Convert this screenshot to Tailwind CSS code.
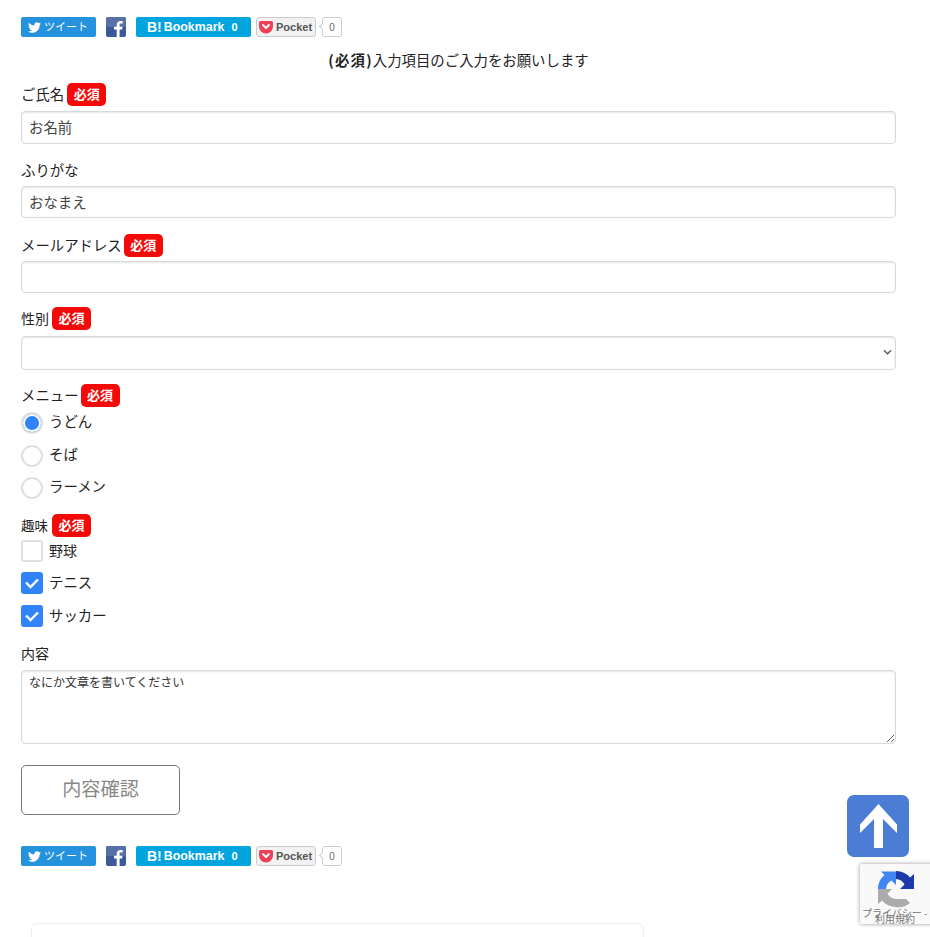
<!DOCTYPE html>
<html lang="ja">
<head>
  <meta charset="UTF-8">
  <title>お問い合わせ</title>
  <meta name="viewport" content="width=device-width, initial-scale=1.0">
  <script src="https://cdn.jsdelivr.net/npm/@tailwindcss/browser@4"></script>
</head>
<body class="bg-white">
  <div class="relative h-[937px] overflow-hidden font-['Noto_Sans_CJK_JP','Liberation_Sans',sans-serif] text-[14.4px] text-[#222]">
    <div class="w-[875px] ml-[21px] pt-[17px]">

      <!-- share buttons -->
      <div class="flex h-[20px] items-center font-['Liberation_Sans','Noto_Sans_CJK_JP',sans-serif]">
        <div class="flex h-[20px] w-[75px] items-center justify-center gap-[3px] rounded-[2px] bg-[#2492dc] pr-[1px] text-[11px] text-white">
          <svg class="w-[13px] h-[13px]" viewBox="0 0 24 24" fill="white"><path d="M23.953 4.57a10 10 0 01-2.825.775 4.958 4.958 0 002.163-2.723c-.951.555-2.005.959-3.127 1.184a4.92 4.92 0 00-8.384 4.482C7.69 8.095 4.067 6.13 1.64 3.162a4.822 4.822 0 00-.666 2.475c0 1.71.87 3.213 2.188 4.096a4.904 4.904 0 01-2.228-.616v.06a4.923 4.923 0 003.946 4.827 4.996 4.996 0 01-2.212.085 4.936 4.936 0 004.604 3.417 9.867 9.867 0 01-6.102 2.105c-.39 0-.779-.023-1.17-.067a13.995 13.995 0 007.557 2.209c9.053 0 13.998-7.496 13.998-13.985 0-.21 0-.42-.015-.63A9.935 9.935 0 0024 4.59z"/></svg>
          <span>ツイート</span>
        </div>
        <svg class="ml-[10px] w-[20px] h-[20px]" viewBox="0 0 20 20"><rect width="20" height="20" rx="2" fill="#3b5998"/><rect width="20" height="10" rx="2" fill="#5671a8"/><path d="M13.6 20v-7.4h2.5l.4-2.9h-2.9V8c0-.8.3-1.4 1.5-1.4h1.5V4c-.3 0-1.2-.1-2.2-.1-2.200 0-3.700 1.300-3.700 3.800v2H8v2.900h2.700V20z" fill="white"/></svg>
        <div class="ml-[10px] flex h-[20px] w-[115px] items-center rounded-[2px] bg-[#00a4de] pl-[11px] text-[12.400px] font-bold text-white">
          <span class="text-[14px]">B!</span><span class="ml-[2px]">Bookmark</span><span class="ml-[7px] text-[11px]">0</span>
        </div>
        <div class="ml-[5px] flex h-[20px] w-[60px] items-center rounded-[3px] border border-[#ccc] bg-[#f2f2f2] pl-[2px] text-[11px] font-bold text-[#555]">
          <svg class="w-[14px] h-[14px]" viewBox="0 0 14 14"><path d="M1.500 1h11A1.500 1.500 0 0114 2.500V6.500A7 7 0 010 6.500V2.500A1.500 1.500 0 011.500 1z" fill="#ee4056"/><path d="M4 5l3 3 3-3" fill="none" stroke="white" stroke-width="1.800" stroke-linecap="round" stroke-linejoin="round"/></svg>
          <span class="ml-[3px]">Pocket</span>
        </div>
        <div class="relative ml-[6px] flex h-[20px] w-[20px] items-center justify-center rounded-[3px] border border-[#ccc] bg-white text-[10px] text-[#666]">
          <span class="absolute -left-[3px] top-[6px] h-[5px] w-[5px] rotate-45 border-b border-l border-[#ccc] bg-white"></span>
          <span>0</span>
        </div>
      </div>

      <p class="mt-[11px] h-[24px] text-center leading-[24px]"><b class="tracking-[1.200px]">(必須)</b>入力項目のご入力をお願いします</p>

      <div class="mt-[11px] flex h-[23px] items-center">
        <span class="pb-[2px]">ご氏名</span>
        <span class="ml-[3px] flex h-[23px] w-[39px] items-center justify-center rounded-[5px] bg-[#f50a0a] pb-[2px] text-[13px] font-bold text-white">必須</span>
      </div>
      <input class="mt-[5px] block h-[33px] w-full rounded-[4px] border border-[#d9d9d9] px-[7px] pb-[3px] text-[#444] shadow-[inset_0_1px_2px_rgba(0,0,0,0.1)]" value="お名前">

      <div class="mt-[15px] flex h-[23px] items-center pb-[2px]">ふりがな</div>
      <input class="mt-[4px] block h-[32px] w-full rounded-[4px] border border-[#d9d9d9] px-[7px] pb-[2px] text-[#444] shadow-[inset_0_1px_2px_rgba(0,0,0,0.1)]" value="おなまえ">

      <div class="mt-[16px] flex h-[23px] items-center">
        <span class="pb-[2px]">メールアドレス</span>
        <span class="ml-[2px] flex h-[23px] w-[39px] items-center justify-center rounded-[5px] bg-[#f50a0a] pb-[2px] text-[13px] font-bold text-white">必須</span>
      </div>
      <input class="mt-[4px] block h-[32px] w-full rounded-[4px] border border-[#d9d9d9] px-[7px] text-[#444] shadow-[inset_0_1px_2px_rgba(0,0,0,0.1)]" value="">

      <div class="mt-[14px] flex h-[23px] items-center">
        <span class="text-[14px]">性別</span>
        <span class="ml-[3px] flex h-[23px] w-[39px] items-center justify-center rounded-[5px] bg-[#f50a0a] pb-[2px] text-[13px] font-bold text-white">必須</span>
      </div>
      <div class="relative mt-[6px] h-[34px]">
        <select class="block h-[34px] w-full appearance-none rounded-[4px] border border-[#d9d9d9] bg-white px-[7px] text-[#444] shadow-[inset_0_1px_2px_rgba(0,0,0,0.1)]"><option></option></select>
        <svg class="absolute right-[4px] top-[13px] w-[9px] h-[7px]" viewBox="0 0 10 8"><path d="M1 1.500l4 4 4-4" fill="none" stroke="#666" stroke-width="1.800"/></svg>
      </div>

      <div class="mt-[14px] flex h-[23px] items-center">
        <span class="pb-[1px]">メニュー</span>
        <span class="ml-[2px] flex h-[23px] w-[39px] items-center justify-center rounded-[5px] bg-[#f50a0a] pb-[2px] text-[13px] font-bold text-white">必須</span>
      </div>
      <div class="mt-[5px] flex h-[22px] items-center gap-[6px]">
        <span class="h-[22px] w-[22px] rounded-full border-2 border-[#e0e0e0] bg-[#3083fb] shadow-[inset_0_0_0_2px_white]"></span>
        <span class="-mt-[5px]">うどん</span>
      </div>
      <div class="mt-[11px] flex h-[22px] items-center gap-[6px]">
        <span class="h-[22px] w-[22px] rounded-full border-2 border-[#e0e0e0]"></span>
        <span class="-mt-[5px]">そば</span>
      </div>
      <div class="mt-[10px] flex h-[22px] items-center gap-[6px]">
        <span class="h-[22px] w-[22px] rounded-full border-2 border-[#e0e0e0]"></span>
        <span class="-mt-[5px]">ラーメン</span>
      </div>

      <div class="mt-[15px] flex h-[23px] items-center">
        <span class="pb-[1px] text-[13.500px]">趣味</span>
        <span class="ml-[4px] flex h-[23px] w-[39px] items-center justify-center rounded-[5px] bg-[#f50a0a] pb-[2px] text-[13px] font-bold text-white">必須</span>
      </div>
      <div class="mt-[3px] flex h-[22px] items-center gap-[6px]">
        <span class="h-[22px] w-[22px] rounded-[3px] border-2 border-[#e0e0e0]"></span>
        <span class="pb-[2px] text-[14px]">野球</span>
      </div>
      <div class="mt-[10px] flex h-[22px] items-center gap-[6px]">
        <span class="flex h-[22px] w-[22px] items-center justify-center rounded-[3px] bg-[#3083fb]">
          <svg class="w-[16px] h-[14px]" viewBox="0 0 16 14"><path d="M2 6.500l4.500 4.500L14 3.500" fill="none" stroke="white" stroke-width="2.400"/></svg>
        </span>
        <span class="pb-[2px]">テニス</span>
      </div>
      <div class="mt-[11px] flex h-[22px] items-center gap-[6px]">
        <span class="flex h-[22px] w-[22px] items-center justify-center rounded-[3px] bg-[#3083fb]">
          <svg class="w-[16px] h-[14px]" viewBox="0 0 16 14"><path d="M2 6.500l4.500 4.500L14 3.500" fill="none" stroke="white" stroke-width="2.400"/></svg>
        </span>
        <span class="pb-[2px]">サッカー</span>
      </div>

      <div class="mt-[16px] flex h-[23px] items-center pb-[2px] text-[14px]">内容</div>
      <textarea class="mt-[4px] block h-[74px] w-full rounded-[4px] border border-[#d9d9d9] px-[7px] py-[2px] text-[12px] text-[#333] shadow-[inset_0_1px_2px_rgba(0,0,0,0.1)]">なにか文章を書いてください</textarea>

      <button class="mt-[21px] block h-[50px] w-[159px] rounded-[5px] border border-[#777] bg-white pb-[3px] text-[19.200px] text-[#888]">内容確認</button>

      <!-- share buttons -->
      <div class="mt-[31px] flex h-[20px] items-center font-['Liberation_Sans','Noto_Sans_CJK_JP',sans-serif]">
        <div class="flex h-[20px] w-[75px] items-center justify-center gap-[3px] rounded-[2px] bg-[#2492dc] pr-[1px] text-[11px] text-white">
          <svg class="w-[13px] h-[13px]" viewBox="0 0 24 24" fill="white"><path d="M23.953 4.57a10 10 0 01-2.825.775 4.958 4.958 0 002.163-2.723c-.951.555-2.005.959-3.127 1.184a4.92 4.92 0 00-8.384 4.482C7.69 8.095 4.067 6.13 1.64 3.162a4.822 4.822 0 00-.666 2.475c0 1.71.87 3.213 2.188 4.096a4.904 4.904 0 01-2.228-.616v.06a4.923 4.923 0 003.946 4.827 4.996 4.996 0 01-2.212.085 4.936 4.936 0 004.604 3.417 9.867 9.867 0 01-6.102 2.105c-.39 0-.779-.023-1.17-.067a13.995 13.995 0 007.557 2.209c9.053 0 13.998-7.496 13.998-13.985 0-.21 0-.42-.015-.63A9.935 9.935 0 0024 4.59z"/></svg>
          <span>ツイート</span>
        </div>
        <svg class="ml-[10px] w-[20px] h-[20px]" viewBox="0 0 20 20"><rect width="20" height="20" rx="2" fill="#3b5998"/><rect width="20" height="10" rx="2" fill="#5671a8"/><path d="M13.6 20v-7.4h2.5l.4-2.9h-2.9V8c0-.8.3-1.4 1.5-1.4h1.5V4c-.3 0-1.2-.1-2.2-.1-2.200 0-3.700 1.300-3.700 3.800v2H8v2.900h2.700V20z" fill="white"/></svg>
        <div class="ml-[10px] flex h-[20px] w-[115px] items-center rounded-[2px] bg-[#00a4de] pl-[11px] text-[12.400px] font-bold text-white">
          <span class="text-[14px]">B!</span><span class="ml-[2px]">Bookmark</span><span class="ml-[7px] text-[11px]">0</span>
        </div>
        <div class="ml-[5px] flex h-[20px] w-[60px] items-center rounded-[3px] border border-[#ccc] bg-[#f2f2f2] pl-[2px] text-[11px] font-bold text-[#555]">
          <svg class="w-[14px] h-[14px]" viewBox="0 0 14 14"><path d="M1.500 1h11A1.500 1.500 0 0114 2.500V6.500A7 7 0 010 6.500V2.500A1.500 1.500 0 011.500 1z" fill="#ee4056"/><path d="M4 5l3 3 3-3" fill="none" stroke="white" stroke-width="1.800" stroke-linecap="round" stroke-linejoin="round"/></svg>
          <span class="ml-[3px]">Pocket</span>
        </div>
        <div class="relative ml-[6px] flex h-[20px] w-[20px] items-center justify-center rounded-[3px] border border-[#ccc] bg-white text-[10px] text-[#666]">
          <span class="absolute -left-[3px] top-[6px] h-[5px] w-[5px] rotate-45 border-b border-l border-[#ccc] bg-white"></span>
          <span>0</span>
        </div>
      </div>

      <!-- next card, cut off by the window -->
      <div class="ml-[10px] mt-[57px] h-[100px] w-[613px] rounded-[6px] border border-[#eee]"></div>
    </div>

    <!-- page top button -->
    <div class="absolute left-[847px] top-[795px] flex h-[62px] w-[62px] items-center justify-center rounded-[7px] bg-[#4a7dd3]">
      <svg class="w-[37px] h-[44px]" viewBox="0 0 37 44"><path d="M18.500 0L37 20.500V29L23 15V44H14V15L0 29V20.500z" fill="white"/></svg>
    </div>

    <!-- recaptcha badge -->
    <div class="absolute left-[860px] top-[864px] h-[60px] w-[80px] rounded-[2px] bg-[#f9f9f9] shadow-[0_0_4px_rgba(0,0,0,0.4)]">
      <svg class="absolute left-[17px] top-[6px] w-[38px] h-[38px]" viewBox="0 0 38 38">
        <path d="M19 1A18 18 0 0 1 33 7.500L37 4V19H23L27.500 14.500A10 10 0 0 0 19 9z" fill="#1c3aa9"/>
        <path d="M1 19A18 18 0 0 1 7.500 5L4 1.500H19V15L14.500 10.500A10 10 0 0 0 9 19z" fill="#4285f4"/>
        <path d="M19 37A18 18 0 0 1 5 30.500L1 34V19H15L10.500 23.500A10 10 0 0 0 19 29H29L33 33A18 18 0 0 1 19 37z" fill="#ababab"/>
      </svg>
      <div class="absolute left-[2px] top-[42px] whitespace-nowrap text-[10px] leading-[14px] text-[#777]">プライバシー - </div>
      <div class="absolute left-[15px] top-[48px] whitespace-nowrap text-[10px] leading-[14px] text-[#777]">利用規約</div>
    </div>
  </div>
</body>
</html>
